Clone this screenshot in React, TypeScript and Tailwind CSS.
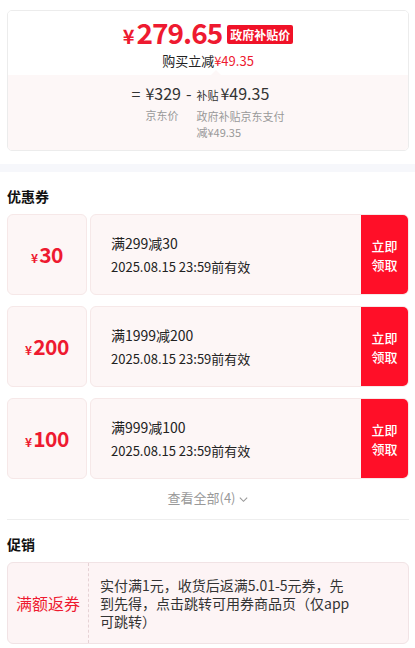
import React from "react";

const font = { fontFamily: '"Noto Sans CJK SC", "Noto Sans", sans-serif' };

function Coupon({ amount, title }: { amount: string; title: string }) {
  return (
    <div className="flex h-[81px]">
      <div className="w-[80px] shrink-0 flex items-center justify-center rounded-[6px] border border-[#f6e8e8] bg-[#fdf6f6]">
        <span className="text-[#ee1a30] font-semibold leading-none flex items-baseline">
          <span className="text-[12px] mr-[1px]">¥</span>
          <span className="text-[21px] tracking-[-0.5px]">{amount}</span>
        </span>
      </div>
      <div className="w-[3px] shrink-0" />
      <div className="flex-1 flex rounded-[6px] border border-[#f6e8e8] bg-[#fdf6f6] overflow-hidden">
        <div className="flex-1 flex flex-col justify-center pl-[20px] text-[#222]">
          <div className="text-[14px] leading-[23px]">{title}</div>
          <div className="text-[13px] leading-[23px]">2025.08.15 23:59前有效</div>
        </div>
        <div className="w-[47px] shrink-0 bg-[#ff0f28] flex flex-col items-center justify-center text-white text-[13px] font-medium leading-[19px]">
          <span>立即</span>
          <span>领取</span>
        </div>
      </div>
    </div>
  );
}

export default function App() {
  return (
    <div className="w-[415px] h-[648px] overflow-hidden bg-white" style={font}>
      {/* Top price card */}
      <div className="pl-[7px] pr-[6px] pt-[10px]">
        <div className="rounded-[5px] border border-[#ececec] overflow-hidden">
          <div className="relative bg-white pt-[6px] pb-[6px] flex flex-col items-center">
            <div className="flex items-center h-[34px]">
              <span className="text-[#ee1a30] font-semibold flex items-baseline leading-[28px]">
                <span className="text-[20px] mr-[2px]">¥</span>
                <span className="text-[28px] tracking-[-1px]">279.65</span>
              </span>
              <span className="ml-[5px] bg-[#f01228] text-white text-[12px] font-bold leading-[19px] px-[3px] rounded-[2px]">
                政府补贴价
              </span>
            </div>
            <div className="mt-[2px] text-[13px] leading-[16px] text-[#222]">
              购买立减<span className="text-[#ee1a30]">¥49.35</span>
            </div>
            <div className="absolute bottom-0 left-[203px] w-0 h-0 border-l-[5px] border-r-[5px] border-b-[5px] border-l-transparent border-r-transparent border-b-[#fdf7f7]" />
          </div>
          <div className="bg-[#fdf7f7] pt-[6px] pb-[10px] flex justify-center">
            <div className="flex items-start gap-[5px] text-[#333] pl-[2px]">
              <span className="text-[16px] leading-[24px]">=</span>
              <div className="flex flex-col">
                <span className="text-[16px] leading-[24px]">¥329</span>
                <span className="text-[11px] leading-[16px] text-[#999] mt-[2px]">京东价</span>
              </div>
              <span className="text-[16px] leading-[24px]">-</span>
              <div className="flex flex-col w-[90px]">
                <span className="leading-[24px] whitespace-nowrap">
                  <span className="text-[11px] mr-[2px]">补贴</span>
                  <span className="text-[16px]">¥49.35</span>
                </span>
                <span className="text-[11px] leading-[16px] text-[#999] mt-[1px]">政府补贴京东支付减¥49.35</span>
              </div>
            </div>
          </div>
        </div>
      </div>

      {/* separator band */}
      <div className="mt-[13px] h-[8px] bg-[#f6f7fb]" />

      {/* Coupons */}
      <div className="pl-[7px] pr-[6px]">
        <div className="mt-[13px] text-[14px] font-bold leading-[22px] text-[#111]">优惠券</div>
        <div className="mt-[7px] flex flex-col gap-[11px]">
          <Coupon amount="30" title="满299减30" />
          <Coupon amount="200" title="满1999减200" />
          <Coupon amount="100" title="满999减100" />
        </div>
        <div className="mt-[10px] flex items-center justify-center text-[13px] leading-[18px] text-[#999]">
          <span>查看全部(4)</span>
          <svg width="11" height="11" viewBox="0 0 12 12" className="ml-[2px] mt-[2px]" fill="none" stroke="#999" strokeWidth="1.2">
            <path d="M2 4l4 4 4-4" />
          </svg>
        </div>
        <div className="mt-[12px] h-px bg-[#eeeeee]" />
        <div className="mt-[13px] text-[14px] font-bold leading-[22px] text-[#111]">促销</div>
        <div className="mt-[7px] h-[82px] flex rounded-[6px] border border-[#f1e3e5] bg-[#fdf4f5]">
          <div className="w-[81px] shrink-0 flex items-center justify-center border-r border-dashed border-[#e6d2d5] text-[#ee1a30] text-[16px]">
            满额返券
          </div>
          <div className="flex items-center pl-[11px]">
            <div className="text-[14px] leading-[18px] text-[#333] whitespace-nowrap">
              实付满1元，收货后返满5.01-5元券，先
              <br />
              到先得，点击跳转可用券商品页（仅app
              <br />
              可跳转）
            </div>
          </div>
        </div>
      </div>
    </div>
  );
}
